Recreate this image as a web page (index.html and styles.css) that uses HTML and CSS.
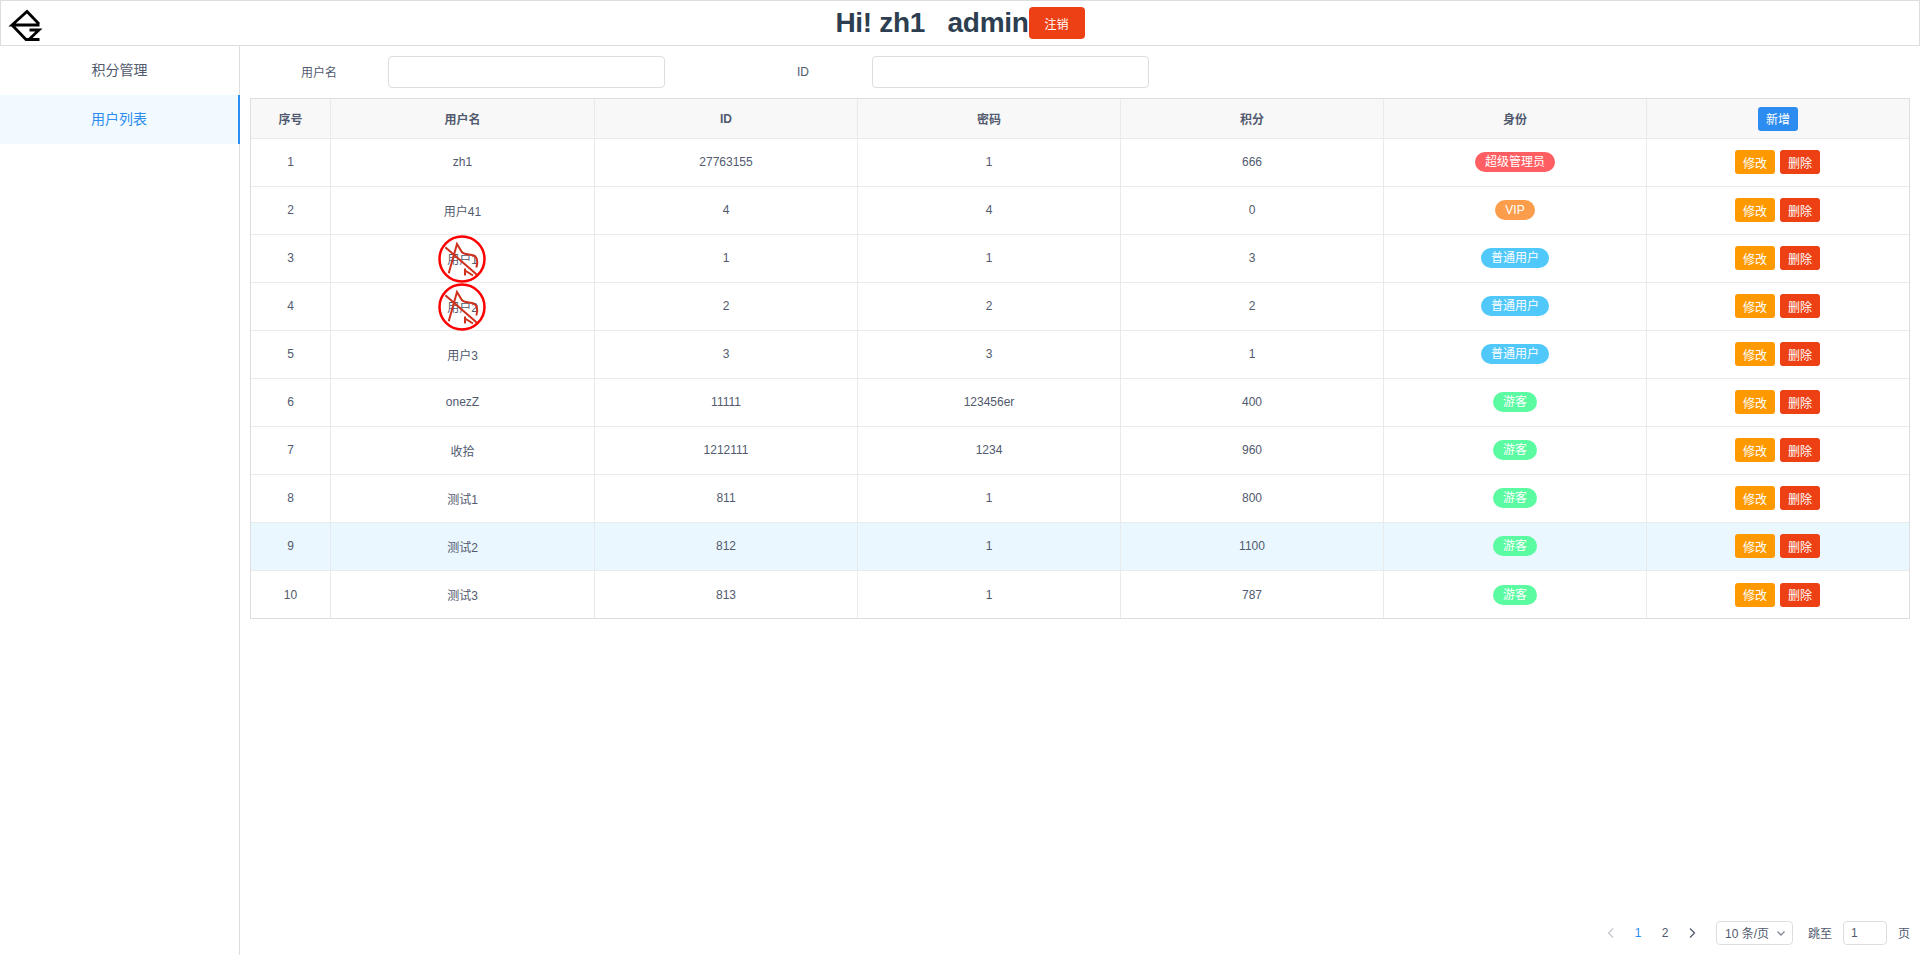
FILE: index.html
```html
<!DOCTYPE html>
<html lang="zh-CN">
<head>
  <meta charset="UTF-8" />
  <title>用户列表</title>
  <link rel="stylesheet" href="styles.css">
</head>
<body>

  <header class="topbar">
    <svg class="logo" width="50" height="44" viewBox="0 0 50 44">
      <path d="M38.500 24H11L26 10.500L38 23M11 24L25 38.500H38.500M28.500 29H38L28.500 38" />
    </svg>
    <h1>Hi! zh1&nbsp;&nbsp; admin<button class="btn btn-danger btn-large">注销</button></h1>
  </header>

  <div class="main">
    <nav class="sidebar">
      <a class="menu-item">积分管理</a>
      <a class="menu-item active">用户列表</a>
    </nav>

    <section class="content">
      <form class="filtros">
        <label class="filtro-label">用户名</label>
        <input class="filtro-input" type="text" />
        <label class="filtro-label filtro-sep">ID</label>
        <input class="filtro-input" type="text" />
      </form>

      <div class="tabla-wrap">
        <table class="tabla">
          <colgroup>
            <col class="col-index" />
            <col class="col-name" />
            <col class="col-data" /><col class="col-data" /><col class="col-data" /><col class="col-data" />
            <col />
          </colgroup>
          <thead>
            <tr>
              <th>序号</th><th>用户名</th><th>ID</th><th>密码</th><th>积分</th><th>身份</th>
              <th><button class="btn btn-primary">新增</button></th>
            </tr>
          </thead>
          <tbody>
            <tr>
              <td>1</td><td>zh1</td><td>27763155</td><td>1</td><td>666</td>
              <td><span class="tag tag-super">超级管理员</span></td>
              <td><div class="acciones"><button class="btn btn-warning">修改</button><button class="btn btn-danger">删除</button></div></td>
            </tr>
            <tr>
              <td>2</td><td>用户41</td><td>4</td><td>4</td><td>0</td>
              <td><span class="tag tag-vip">VIP</span></td>
              <td><div class="acciones"><button class="btn btn-warning">修改</button><button class="btn btn-danger">删除</button></div></td>
            </tr>
            <tr>
              <td>3</td>
              <td class="baneado">用户1
                <svg class="ban" width="48" height="48" viewBox="0 0 48 48">
                  <circle class="ban-ring" cx="24" cy="24" r="22.500" />
                  <path class="ban-mark" d="M7.300 12.300L39 39.700M10.700 38.300L19 9L24 17.300C26.500 20 32 19 35.700 20.500C39.500 22.500 40 27 38.300 32.500M27 33.500V40.500M27 35.500L35 40.500" />
                </svg>
              </td>
              <td>1</td><td>1</td><td>3</td>
              <td><span class="tag tag-user">普通用户</span></td>
              <td><div class="acciones"><button class="btn btn-warning">修改</button><button class="btn btn-danger">删除</button></div></td>
            </tr>
            <tr>
              <td>4</td>
              <td class="baneado">用户2
                <svg class="ban" width="48" height="48" viewBox="0 0 48 48">
                  <circle class="ban-ring" cx="24" cy="24" r="22.500" />
                  <path class="ban-mark" d="M7.300 12.300L39 39.700M10.700 38.300L19 9L24 17.300C26.500 20 32 19 35.700 20.500C39.500 22.500 40 27 38.300 32.500M27 33.500V40.500M27 35.500L35 40.500" />
                </svg>
              </td>
              <td>2</td><td>2</td><td>2</td>
              <td><span class="tag tag-user">普通用户</span></td>
              <td><div class="acciones"><button class="btn btn-warning">修改</button><button class="btn btn-danger">删除</button></div></td>
            </tr>
            <tr>
              <td>5</td><td>用户3</td><td>3</td><td>3</td><td>1</td>
              <td><span class="tag tag-user">普通用户</span></td>
              <td><div class="acciones"><button class="btn btn-warning">修改</button><button class="btn btn-danger">删除</button></div></td>
            </tr>
            <tr>
              <td>6</td><td>onezZ</td><td>11111</td><td>123456er</td><td>400</td>
              <td><span class="tag tag-guest">游客</span></td>
              <td><div class="acciones"><button class="btn btn-warning">修改</button><button class="btn btn-danger">删除</button></div></td>
            </tr>
            <tr>
              <td>7</td><td>收拾</td><td>1212111</td><td>1234</td><td>960</td>
              <td><span class="tag tag-guest">游客</span></td>
              <td><div class="acciones"><button class="btn btn-warning">修改</button><button class="btn btn-danger">删除</button></div></td>
            </tr>
            <tr>
              <td>8</td><td>测试1</td><td>811</td><td>1</td><td>800</td>
              <td><span class="tag tag-guest">游客</span></td>
              <td><div class="acciones"><button class="btn btn-warning">修改</button><button class="btn btn-danger">删除</button></div></td>
            </tr>
            <tr class="hover">
              <td>9</td><td>测试2</td><td>812</td><td>1</td><td>1100</td>
              <td><span class="tag tag-guest">游客</span></td>
              <td><div class="acciones"><button class="btn btn-warning">修改</button><button class="btn btn-danger">删除</button></div></td>
            </tr>
            <tr>
              <td>10</td><td>测试3</td><td>813</td><td>1</td><td>787</td>
              <td><span class="tag tag-guest">游客</span></td>
              <td><div class="acciones"><button class="btn btn-warning">修改</button><button class="btn btn-danger">删除</button></div></td>
            </tr>
          </tbody>
        </table>
      </div>

      <div class="pager">
        <span class="page-item page-off">
          <svg width="12" height="12" viewBox="0 0 12 12"><path d="M8 1.500L3.500 6L8 10.500" /></svg>
        </span>
        <span class="page-item page-current">1</span>
        <span class="page-item">2</span>
        <span class="page-item">
          <svg width="12" height="12" viewBox="0 0 12 12"><path d="M4 1.500L8.500 6L4 10.500" /></svg>
        </span>
        <div class="page-select">
          <span>10 条/页</span>
          <svg width="12" height="12" viewBox="0 0 12 12"><path d="M2.500 4.500L6 8L9.500 4.500" /></svg>
        </div>
        <span class="page-jump">跳至</span>
        <input class="page-input" type="text" value="1" />
        <span class="page-unit">页</span>
      </div>
    </section>
  </div>

</body>
</html>
```

FILE: styles.css
```css
* {
  box-sizing: border-box;
}
html, body {
  height: 100%;
}
body {
  margin: 0;
  display: flex;
  flex-direction: column;
  overflow: hidden;
  font-family: "Liberation Sans", "Noto Sans CJK SC", sans-serif;
  font-size: 12px;
  color: #515a6e;
  background: #fff;
}

/* cabecera */
.topbar {
  position: relative;
  flex: none;
  height: 46px;
  border: 1px solid #dcdee2;
}
.logo {
  position: absolute;
  left: 0;
  top: 0;
}
.logo path {
  fill: none;
  stroke: #000;
  stroke-width: 2.800;
}
.topbar h1 {
  margin: 0;
  height: 44px;
  display: flex;
  align-items: center;
  justify-content: center;
  font-size: 28px;
  font-weight: bold;
  letter-spacing: -0.3px;
  color: #2c3e50;
  white-space: pre;
}

/* botones */
.btn {
  height: 24px;
  width: 40px;
  padding: 0;
  border: none;
  border-radius: 3px;
  font-family: inherit;
  font-size: 12px;
  letter-spacing: 0;
  color: #fff;
  cursor: pointer;
}
.btn-large {
  width: 56px;
  height: 32px;
  border-radius: 4px;
}
.btn-primary {
  background-color: #2d8cf0;
}
.btn-warning {
  background-color: #ff9900;
}
.btn-danger {
  background-color: #ed4014;
}

/* menu lateral */
.main {
  flex: 1;
  display: flex;
  min-height: 0;
}
.sidebar {
  flex: none;
  width: 240px;
  border-right: 1px solid #dcdee2;
}
.menu-item {
  display: block;
  height: 49px;
  line-height: 49px;
  text-align: center;
  font-size: 14px;
}
.menu-item.active {
  color: #2d8cf0;
  background: #f0faff;
  border-right: 2px solid #2d8cf0;
  margin-right: -1px;
}

/* contenido */
.content {
  flex: 1;
  min-width: 0;
  display: flex;
  flex-direction: column;
  padding: 10px 10px 10px;
}
.filtros {
  display: flex;
  align-items: center;
  height: 32px;
  margin-bottom: 10px;
}
.filtro-label {
  width: 138px;
  padding-bottom: 1px;
  text-align: center;
}
.filtro-sep {
  margin-left: 69px;
}
.filtro-input {
  width: 277px;
  height: 32px;
  border: 1px solid #dcdee2;
  border-radius: 4px;
  outline: none;
}

/* tabla */
.tabla-wrap {
  border: 1px solid #dcdee2;
}
.tabla {
  width: 100%;
  table-layout: fixed;
  border-collapse: separate;
  border-spacing: 0;
}
.col-index {
  width: 80px;
}
.col-name {
  width: 264px;
}
.col-data {
  width: 263px;
}
.tabla th, .tabla td {
  padding: 0;
  text-align: center;
  border-right: 1px solid #e8eaec;
  border-bottom: 1px solid #e8eaec;
}
.tabla th:last-child, .tabla td:last-child {
  border-right: none;
}
.tabla th {
  height: 40px;
  background: #f8f8f9;
  font-weight: bold;
}
.tabla td {
  height: 48px;
  padding-bottom: 1px;
}
.tabla tbody tr:last-child td {
  height: 47px;
  padding-bottom: 0;
  border-bottom: none;
}
.tabla tr.hover td {
  background: #ebf7ff;
}
.baneado {
  position: relative;
}
.ban {
  position: absolute;
  left: 50%;
  top: 50%;
  margin: -24px 0 0 -25px;
  fill: none;
}
.ban-ring {
  stroke: #f00;
  stroke-width: 2.500;
}
.ban-mark {
  stroke: #d0301c;
  stroke-width: 2;
}
.acciones {
  display: flex;
  justify-content: center;
  gap: 5px;
  padding-right: 1px;
}
.tag {
  display: inline-block;
  height: 20px;
  line-height: 20px;
  padding: 0 10px;
  border-radius: 10px;
  color: #fff;
  vertical-align: middle;
}
.tag-super {
  background: #ff5f63;
}
.tag-vip {
  background: #fb9d4b;
}
.tag-user {
  background: #50c8fa;
}
.tag-guest {
  background: #5bfba1;
}

/* paginacion */
.pager {
  margin-top: auto;
  display: flex;
  align-items: center;
  justify-content: flex-end;
  height: 24px;
}
.page-item {
  width: 24px;
  height: 24px;
  margin-right: 3px;
  display: flex;
  align-items: center;
  justify-content: center;
}
.page-item path, .page-select path {
  fill: none;
  stroke: #515a6e;
  stroke-width: 1.300;
}
.page-off path {
  stroke: #c5c8ce;
}
.page-current {
  color: #2d8cf0;
}
.page-select {
  width: 77px;
  height: 24px;
  margin-left: 9px;
  padding: 0 5px 1px 8px;
  display: flex;
  align-items: center;
  justify-content: space-between;
  border: 1px solid #dcdee2;
  border-radius: 4px;
}
.page-select path {
  stroke: #808695;
}
.page-jump {
  margin-left: 15px;
  padding-bottom: 1px;
}
.page-unit {
  padding-bottom: 1px;
}
.page-input {
  width: 44px;
  height: 24px;
  margin: 0 11px;
  padding: 0 7px;
  border: 1px solid #dcdee2;
  border-radius: 4px;
  font-family: inherit;
  font-size: 12px;
  color: #515a6e;
  outline: none;
}
```
